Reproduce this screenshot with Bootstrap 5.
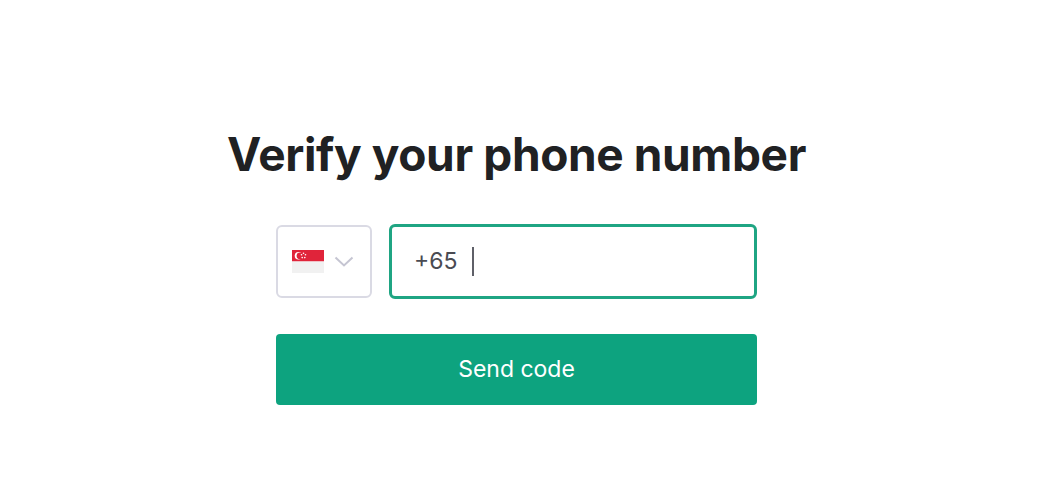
<!DOCTYPE html>
<html lang="en">
<head>
<meta charset="utf-8">
<title>Verify your phone number</title>
<link rel="stylesheet" href="https://cdn.jsdelivr.net/npm/bootstrap@5.3.0/dist/css/bootstrap.min.css">
<style>
html,body{height:478px;overflow:hidden;background:#fff}
body{font-family:Inter,"Liberation Sans",sans-serif}
.vf-page{padding-top:124px;padding-right:24px}
.vf-title{font-size:46px;line-height:60px;font-weight:650;color:#202123;margin:0 0 41px;letter-spacing:-.37px;white-space:nowrap}
.vf-form{width:481px}
.vf-row{gap:17px;margin-bottom:35px}
.vf-country{width:96px;height:73px;border:2px solid #dadae4;border-radius:6px;background:#fff;padding:0 2px 0 0;gap:10px}
.vf-phone{height:75px;margin-top:-1px;border:3px solid #1fa583;border-radius:6px;padding-left:22px;font-size:23px;color:#4a4b52;background:#fff}
.vf-caret{width:2px;height:29px;background:#5f6068;margin-left:15px}
.vf-send{height:71px;background:#0da37f;border:0;border-radius:4px;color:#fff;font-size:23px;line-height:1;padding:0}
</style>
</head>
<body>
<main class="vf-page d-flex flex-column align-items-center">
  <h1 class="vf-title text-center">Verify your phone number</h1>
  <form class="vf-form">
    <div class="vf-row d-flex align-items-start">
      <button type="button" class="vf-country d-flex align-items-center justify-content-center flex-shrink-0" aria-label="Singapore">
        <svg width="32" height="23" viewBox="0 0 32 23" aria-hidden="true">
          <rect width="32" height="11.5" fill="#e0243a"/>
          <rect y="11.5" width="32" height="11.5" fill="#f1f1f1"/>
          <circle cx="6.5" cy="5.8" r="3.8" fill="#fff"/>
          <circle cx="8" cy="5.8" r="3.4" fill="#e0243a"/>
          <circle cx="11.5" cy="3.3" r=".8" fill="#fff"/>
          <circle cx="9.5" cy="4.8" r=".8" fill="#fff"/>
          <circle cx="13.5" cy="4.8" r=".8" fill="#fff"/>
          <circle cx="10.2" cy="7.6" r=".8" fill="#fff"/>
          <circle cx="12.8" cy="7.6" r=".8" fill="#fff"/>
        </svg>
        <svg width="20" height="11" viewBox="0 0 20 11" aria-hidden="true"><path d="M1.5 1.5 10 9.5l8.5-8" fill="none" stroke="#c5c5d2" stroke-width="2"/></svg>
      </button>
      <div class="vf-phone flex-grow-1 d-flex align-items-center"><span>+65</span><span class="vf-caret"></span></div>
    </div>
    <button type="button" class="vf-send btn w-100">Send code</button>
  </form>
</main>
<script src="https://cdn.jsdelivr.net/npm/bootstrap@5.3.0/dist/js/bootstrap.bundle.min.js"></script>
</body>
</html>
